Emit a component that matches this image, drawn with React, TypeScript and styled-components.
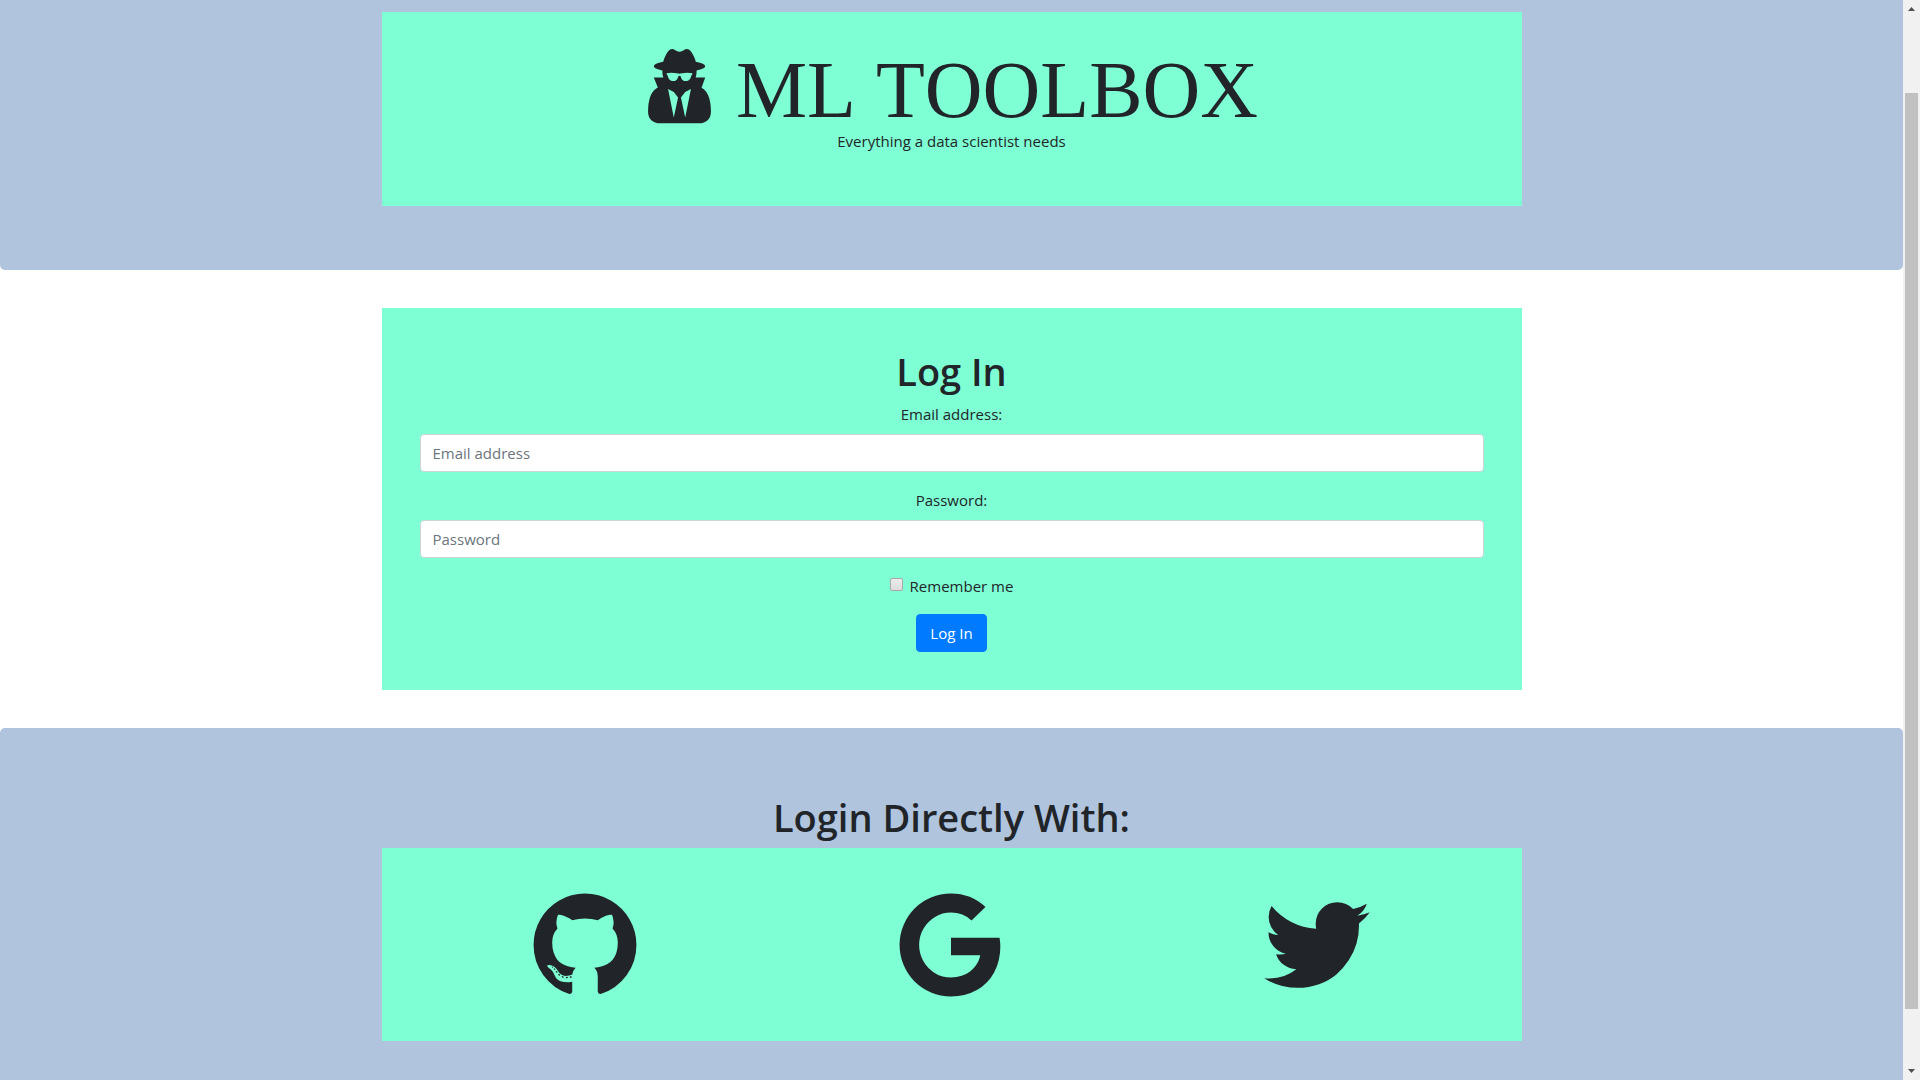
import React from "react";
import styled, { createGlobalStyle } from "styled-components";

const ink = "#212529";
const mint = "#7fffd4";
const steel = "#b0c4de";

const GlobalStyle = createGlobalStyle`
  *, *::before, *::after { box-sizing: border-box; }
  body {
    margin: 0;
    background: #fff;
    color: ${ink};
    font-family: "Open Sans", "Noto Sans", sans-serif;
    font-size: 15px;
    line-height: 24px;
    overflow: hidden;
  }
`;

const Window = styled.div`
  display: grid;
  grid-template-columns: minmax(0, 1fr) 17px;
  height: 100vh;
  overflow: hidden;
`;

const Page = styled.div`
  display: flex;
  flex-direction: column;
  gap: 38px;
  min-width: 0;
  height: 100vh;
  overflow: hidden;
`;

const Banner = styled.header`
  flex: none;
  padding: 12px 0 64px;
  background: ${steel};
  border-radius: 0 0 5px 5px;
`;

const SocialBand = styled.section`
  flex: 1 0 auto;
  padding: 64px 0;
  background: ${steel};
  border-radius: 5px 5px 0 0;
  text-align: center;
`;

const Panel = styled.div`
  width: 100%;
  max-width: 1140px;
  margin: 0 auto;
  padding: 38px;
  background: ${mint};
  text-align: center;
`;

const Brand = styled.h1`
  display: flex;
  justify-content: center;
  gap: 22px;
  margin: 0;
  font-family: "Liberation Serif", "Times New Roman", serif;
  font-size: 80px;
  font-weight: 400;
  font-kerning: none;
  line-height: 80px;
`;

const Glyph = styled.svg<{ $width: number; $height: number }>`
  display: block;
  flex: none;
  width: ${(p) => p.$width}px;
  height: ${(p) => p.$height}px;
  fill: currentColor;
  overflow: visible;
`;

const Tagline = styled.p`
  margin: 0 0 16px;
  line-height: 22px;
`;

const Heading = styled.h2`
  margin: 0 0 6px;
  font-size: 38px;
  font-weight: 600;
  line-height: 50px;
`;

const LoginForm = styled.form`
  display: flex;
  flex-direction: column;
  align-items: center;
  gap: 16px;
`;

const Field = styled.div`
  display: flex;
  flex-direction: column;
  gap: 8px;
  width: 100%;
`;

const TextInput = styled.input`
  width: 100%;
  height: 38px;
  padding: 6px 12px;
  border: 1px solid #ced4da;
  border-radius: 4px;
  background: #fff;
  color: #495057;
  font: inherit;
  &::placeholder { color: #6c757d; opacity: 1; }
`;

const CheckLabel = styled.label`
  display: flex;
  gap: 7px;
`;

const CheckBox = styled.input`
  appearance: none;
  width: 13px;
  height: 13px;
  margin: 4px 0 0;
  border: 1px solid #a9a9a9;
  border-radius: 2px;
  background: linear-gradient(#ececec, #dcdcdc);
  &:checked { background: #007bff; }
`;

const SubmitButton = styled.button`
  height: 38px;
  padding: 6px 13px;
  border: 1px solid #007bff;
  border-radius: 4px;
  background: #007bff;
  color: #fff;
  font: inherit;
  cursor: pointer;
`;

const SocialPanel = styled(Panel)`
  display: grid;
  grid-template-columns: repeat(3, 1fr);
  padding: 37px 22px 36px 21px;
`;

const SocialLink = styled.a`
  display: flex;
  justify-content: center;
  color: ${ink};
`;

const ScrollTrack = styled.div`
  display: flex;
  flex-direction: column;
  height: 100vh;
  background: #f1f1f1;
`;

const ScrollArrow = styled.svg`
  flex: none;
  width: 17px;
  height: 17px;
  fill: #505050;
`;

const ScrollSpace = styled.div<{ $grow: number }>`
  flex: ${(p) => p.$grow} 0 0;
`;

const ScrollThumb = styled.div`
  flex: 916 0 0;
  margin: 0 2px;
  background: #c1c1c1;
`;

const secretPath =
  "M768 1536l96-448-96-128-128-64zm256 0l128-640-128 64-96 128zm160-990q-2-4-4-6-10-8-96-8-70 0-167 19-7 2-21 2t-21-2q-97-19-167-19-86 0-96 8-2 2-4 6 2 18 4 27 2 3 7.5 6.5t7.5 10.5q2 4 7.5 20.5t7 20.5 7.5 17 8.500 17 9 14 12 13.5 14 9.5 17.5 8 20.5 4 24.5 2q36 0 59-12.5t32.5-30 14.5-34.5 11.5-29.5 17.5-12.5h12q11 0 17.5 12.5t11.5 29.5 14.5 34.5 32.5 30 59 12.5q13 0 24.5-2t20.5-4 17.5-8 14-9.5 12-13.5 9-14 8.5-17 7.5-17 7-20.5 7.5-20.5q2-7 7.5-10.5t7.5-6.5q2-9 4-27zm416 859q0 120-73 189.5t-194 69.5h-874q-121 0-194-69.5t-73-189.5q0-61 4.5-118t19-125.5 37.5-123.5 63.5-103.5 93.5-74.5l-90-220h214q-22-64-22-128 0-12 2-32-194-40-194-96 0-57 210-99 17-62 51.5-134t70.5-114q32-37 76-37 30 0 84 31t84 31 84-31 84-31q44 0 76 37 36 42 70.5 114t51.5 134q210 42 210 99 0 56-194 96 7 81-20 160h214l-82 225q63 33 107.5 96.5t65.5 143.5 29 151.5 8 148.5z";

const socials = [
  {
    name: "GitHub",
    path: "M896 128q209 0 385.5 103t279.5 279.5 103 385.5q0 251-146.5 451.5t-378.5 277.5q-27 5-40-7t-13-30q0-3 .5-76.5t.5-134.5q0-97-52-142 57-6 102.5-18t94-39 81-66.5 53-105 20.5-150.5q0-119-79-206 37-91-8-204-28-9-81 11t-92 44l-38 24q-93-26-192-26t-192 26q-16-11-42.5-27t-83.5-38.5-85-13.5q-45 113-8 204-79 87-79 206 0 85 20.5 150t52.5 105 80.5 67 94 39 102.5 18q-39 36-49 103-21 10-45 15t-57 5-65.5-21.5-55.5-62.5q-19-32-48.5-52t-49.5-24l-20-3q-21 0-29 4.5t-5 11.5 9 14 13 12l7 5q22 10 43.5 38t31.5 51l10 23q13 38 44 61.5t67 30 69.5 7 55.5-3.5l23-4q0 38 .5 88.5t.5 54.5q0 18-13 30t-40 7q-232-77-378.5-277.5t-146.5-451.5q0-209 103-385.5t279.5-279.5 385.5-103zm-477 1103q3-7-7-12-10-3-13 2-3 7 7 12 9 6 13-2zm31 34q7-5-2-16-10-9-16-3-7 5 2 16 10 10 16 3zm30 45q9-7 0-19-8-13-17-6-9 5 0 18t17 7zm42 42q8-8-4-19-12-12-20-3-9 8 4 19 12 12 20 3zm57 25q3-11-13-16-15-4-19 7t13 15q15 6 19-6zm63 5q0-13-17-11-16 0-16 11 0 13 17 11 16 0 16-11zm58-10q-2-11-18-9-16 3-14 15t18 8 14-14z",
  },
  {
    name: "Google",
    path: "M896 786h725q12 67 12 128 0 217-91 387.5t-259.5 266.5-386.5 96q-157 0-299-60.5t-245-163.5-163.5-245-60.5-299 60.5-299 163.5-245 245-163.5 299-60.5q300 0 515 201l-209 201q-123-119-306-119-129 0-238.5 65t-173.5 176.5-64 243.5 64 243.5 173.5 176.5 238.5 65q87 0 160-24t120-60 82-82 51.5-87 22.5-78h-436v-264z",
  },
  {
    name: "Twitter",
    path: "M1684 408q-67 98-162 167 1 14 1 42 0 130-38 259.5t-115.5 248.5-184.5 210.5-258 146-323 54.5q-271 0-496-145 35 4 78 4 225 0 401-138-105-2-188-64.5t-114-159.5q33 5 61 5 43 0 85-11-112-23-185.5-111.5t-73.5-205.5v-4q68 38 146 41-66-44-105-115t-39-154q0-88 44-163 121 149 294.5 238.5t371.5 99.5q-8-38-8-74 0-134 94.5-228.5t228.5-94.5q140 0 236 102 109-21 205-78-37 115-142 178 93-10 186-50z",
  },
];

export default function App() {
  return (
    <>
      <GlobalStyle />
      <Window>
        <Page>
          <Banner>
            <Panel>
              <Brand>
                <Glyph $width={69} $height={80} viewBox="128 22 1536 1792" aria-hidden="true">
                  <path d={secretPath} />
                </Glyph>
                <span>ML TOOLBOX</span>
              </Brand>
              <Tagline>Everything a data scientist needs</Tagline>
            </Panel>
          </Banner>

          <Panel as="main">
            <Heading>Log In</Heading>
            <LoginForm onSubmit={(e) => e.preventDefault()}>
              <Field>
                <label htmlFor="email">Email address:</label>
                <TextInput id="email" type="email" placeholder="Email address" />
              </Field>
              <Field>
                <label htmlFor="password">Password:</label>
                <TextInput id="password" type="password" placeholder="Password" />
              </Field>
              <CheckLabel htmlFor="remember">
                <CheckBox id="remember" type="checkbox" />
                Remember me
              </CheckLabel>
              <SubmitButton type="submit">Log In</SubmitButton>
            </LoginForm>
          </Panel>

          <SocialBand>
            <Heading>Login Directly With:</Heading>
            <SocialPanel>
              {socials.map((s) => (
                <SocialLink key={s.name} href="#" aria-label={s.name}>
                  <Glyph $width={120} $height={120} viewBox="0 0 1792 1792" aria-hidden="true">
                    <path d={s.path} />
                  </Glyph>
                </SocialLink>
              ))}
            </SocialPanel>
          </SocialBand>
        </Page>

        <ScrollTrack aria-hidden="true">
          <ScrollArrow viewBox="0 0 17 17">
            <path d="M5 11L8.500 7L12 11z" />
          </ScrollArrow>
          <ScrollSpace $grow={76} />
          <ScrollThumb />
          <ScrollSpace $grow={54} />
          <ScrollArrow viewBox="0 0 17 17">
            <path d="M5 6L8.500 10L12 6z" />
          </ScrollArrow>
        </ScrollTrack>
      </Window>
    </>
  );
}
